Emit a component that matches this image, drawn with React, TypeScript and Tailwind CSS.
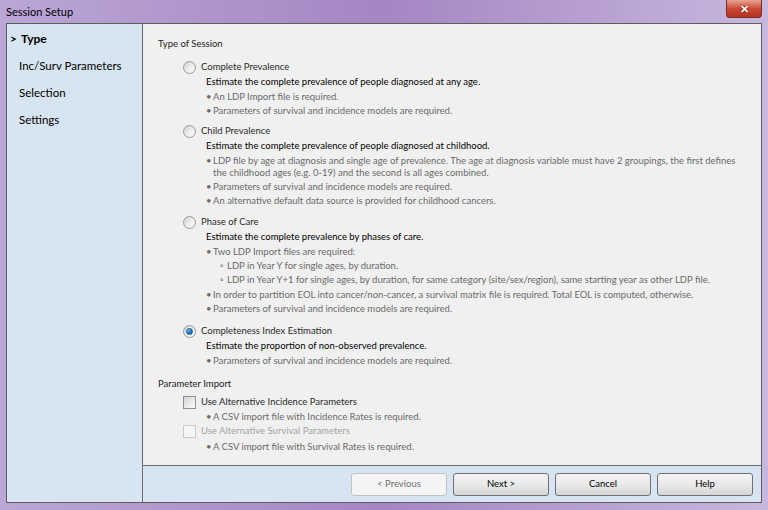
import React from "react";

function Radio({ checked }: { checked?: boolean }) {
  return (
    <span className="inline-flex h-[13px] w-[13px] shrink-0 items-center justify-center rounded-full border border-[#9a9a9a] bg-gradient-to-br from-[#d2d2d2] via-[#ececec] to-[#ffffff]">
      {checked && (
        <span className="h-[7px] w-[7px] rounded-full border border-[#1c5180] bg-gradient-to-br from-[#9ad4fb] via-[#2a8ad6] to-[#0f4f8c]" />
      )}
    </span>
  );
}

function Check({ disabled }: { disabled?: boolean }) {
  return (
    <span
      className={
        disabled
          ? "inline-block h-[13px] w-[13px] shrink-0 border border-[#c9c9c9] bg-[#f6f6f6]"
          : "inline-block h-[13px] w-[13px] shrink-0 border border-[#8e8f8f] bg-gradient-to-br from-[#d4d4d4] to-[#fbfbfb]"
      }
    />
  );
}

function Bullet({ children, first }: { children: React.ReactNode; first?: boolean }) {
  return (
    <div className={first ? "mt-[3px] flex text-[#6a6a6a] leading-[12px]" : "mt-[2px] flex text-[#6a6a6a] leading-[12px]"}>
      <span className="w-[7px] shrink-0">•</span>
      <span className="whitespace-nowrap">{children}</span>
    </div>
  );
}

function Option({
  label,
  desc,
  checked,
  gap,
  children,
}: {
  label: string;
  desc: string;
  checked?: boolean;
  gap: string;
  children: React.ReactNode;
}) {
  return (
    <div className={`ml-[25px] ${gap}`}>
      <div className="flex h-[14px] items-center gap-[5px] text-[#2a2a2a]">
        <Radio checked={checked} />
        <span>{label}</span>
      </div>
      <div className="ml-[23px]">
        <div className="mt-[2px] h-[12px] leading-[12px] text-black">{desc}</div>
        {children}
      </div>
    </div>
  );
}

export default function App() {
  const buttons = ["< Previous", "Next >", "Cancel", "Help"];
  return (
    <div
      className="flex h-[510px] w-[768px] flex-col overflow-hidden bg-gradient-to-r from-[#bba6d6] via-[#a486c3] to-[#c8b7de] text-[9.5px]"
      style={{ fontFamily: 'Lato, "Open Sans", sans-serif' }}
    >
      {/* title bar */}
      <div className="flex h-[23px] shrink-0 items-start justify-between pl-[6px] pr-[6px]">
        <span className="mt-[4px] text-[11px] text-black">Session Setup</span>
        <span className="flex h-[18px] w-[36px] items-center justify-center rounded-b-[4px] border border-t-0 border-[#7a2c22] bg-gradient-to-b from-[#e6a295] via-[#cc4a33] to-[#b5331f] text-[11px] font-bold leading-none text-white [text-shadow:0_0_2px_#400]">
          ✕
        </span>
      </div>

      {/* body */}
      <div className="mx-[6px] mb-[7px] flex flex-1 border border-[#5e5e5e] bg-[#d7e4f2]">
        {/* sidebar */}
        <div className="w-[136px] shrink-0 border-r border-[#6b6b6b] pt-[1px] text-[11.5px] text-black">
          <div className="flex h-[27px] items-center pl-[3px] font-bold">
            <span className="w-[11px]">&gt;</span>
            <span className="text-[12px]">Type</span>
          </div>
          <div className="flex h-[27px] items-center pl-[12px]">Inc/Surv Parameters</div>
          <div className="flex h-[27px] items-center pl-[12px]">Selection</div>
          <div className="flex h-[27px] items-center pl-[12px]">Settings</div>
        </div>

        {/* main */}
        <div className="flex flex-1 flex-col">
          <div className="flex-1 border-b border-[#6b6b6b] bg-[#f0f0f0] pl-[15px] pt-[13px] text-[#222]">
            <div className="mb-[9px] h-[14px] leading-[14px]">Type of Session</div>

            <Option
              gap="mb-[7px]"
              label="Complete Prevalence"
              desc="Estimate the complete prevalence of people diagnosed at any age."
            >
              <Bullet first>An LDP Import file is required.</Bullet>
              <Bullet>Parameters of survival and incidence models are required.</Bullet>
            </Option>

            <Option
              gap="mb-[8px]"
              label="Child Prevalence"
              desc="Estimate the complete prevalence of people diagnosed at childhood."
            >
              <Bullet first>
                LDP file by age at diagnosis and single age of prevalence. The age at diagnosis variable must have 2 groupings, the first defines
                <br />
                the childhood ages (e.g. 0-19) and the second is all ages combined.
              </Bullet>
              <Bullet>Parameters of survival and incidence models are required.</Bullet>
              <Bullet>An alternative default data source is provided for childhood cancers.</Bullet>
            </Option>

            <Option
              gap="mb-[9px]"
              label="Phase of Care"
              desc="Estimate the complete prevalence by phases of care."
            >
              <Bullet first>Two LDP Import files are required:</Bullet>
              <div className="ml-[14px] text-[#6a6a6a] leading-[12px]">
                <div className="mt-[2px] flex">
                  <span className="w-[7px] shrink-0">◦</span>
                  <span>LDP in Year Y for single ages, by duration.</span>
                </div>
                <div className="mt-[2px] flex">
                  <span className="w-[7px] shrink-0">◦</span>
                  <span className="whitespace-nowrap">
                    LDP in Year Y+1 for single ages, by duration, for same category (site/sex/region), same starting year as other LDP file.
                  </span>
                </div>
              </div>
              <Bullet first>
                In order to partition EOL into cancer/non-cancer, a survival matrix file is required. Total EOL is computed, otherwise.
              </Bullet>
              <Bullet>Parameters of survival and incidence models are required.</Bullet>
            </Option>

            <Option
              gap="mb-[10px]"
              checked
              label="Completeness Index Estimation"
              desc="Estimate the proportion of non-observed prevalence."
            >
              <Bullet first>Parameters of survival and incidence models are required.</Bullet>
            </Option>

            <div className="h-[14px] leading-[14px]">Parameter Import</div>
            <div className="ml-[25px] mt-[4px]">
              <div className="flex h-[14px] items-center gap-[5px] text-[#2a2a2a]">
                <Check />
                <span>Use Alternative Incidence Parameters</span>
              </div>
              <div className="ml-[23px] mb-[1px]">
                <Bullet>A CSV import file with Incidence Rates is required.</Bullet>
              </div>
              <div className="flex h-[14px] items-center gap-[5px] text-[#a3a3a3]">
                <Check disabled />
                <span>Use Alternative Survival Parameters</span>
              </div>
              <div className="ml-[23px]">
                <Bullet first>A CSV import file with Survival Rates is required.</Bullet>
              </div>
            </div>
          </div>

          {/* buttons */}
          <div className="flex h-[36px] shrink-0 items-center justify-end gap-[6px] pr-[8px]">
            {buttons.map((b, i) => (
              <button
                key={b}
                className={
                  i === 0
                    ? "mt-[1px] h-[23px] w-[96px] rounded-[3px] border border-[#c2c2c2] bg-[#f4f4f4] text-[9.5px] text-[#6f6f6f]"
                    : "mt-[1px] h-[23px] w-[96px] rounded-[3px] border border-[#707070] bg-gradient-to-b from-[#f3f3f3] via-[#e9e9e9] to-[#d6d6d6] text-[9.5px] text-black"
                }
              >
                {b}
              </button>
            ))}
          </div>
        </div>
      </div>
    </div>
  );
}
